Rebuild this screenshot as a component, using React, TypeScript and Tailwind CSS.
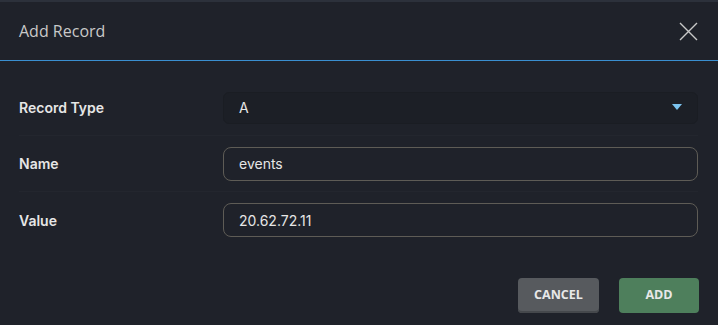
const font = { fontFamily: '"Inter", "Noto Sans", sans-serif' };

function Row({ label, children, last }: { label: string; children: React.ReactNode; last?: boolean }) {
  return (
    <div className={`flex h-[56px] items-center ${last ? "" : "border-b border-[#23262e]"}`}>
      <div className="w-[204px] shrink-0 text-[14px] font-semibold text-[#e6e6e6]">{label}</div>
      <div className="flex-1">{children}</div>
    </div>
  );
}

export default function App() {
  return (
    <div className="h-[325px] w-[718px] overflow-hidden border-t-2 border-[#2c313b] bg-[#1f222a]" style={font}>
      {/* header */}
      <div className="flex h-[58px] items-center justify-between pl-[19px] pr-[20px]">
        <h1 className="text-[16px] text-[#c9c9c9]" style={{ fontFamily: '"Open Sans", sans-serif' }}>
          Add Record
        </h1>
        <button className="flex h-[20px] w-[20px] items-center justify-center text-[#c8c8c8]" aria-label="Close">
          <svg width="19" height="19" viewBox="0 0 19 19" fill="none" stroke="currentColor" strokeWidth="1.4">
            <path d="M1 1 L18 18 M18 1 L1 18" />
          </svg>
        </button>
      </div>
      <div className="h-px bg-[#3a8fd0]" />

      {/* form */}
      <div className="pl-[19px] pr-[20px] pt-[19px]">
        <Row label="Record Type">
          <div className="flex h-[32px] items-center justify-between rounded-md border border-[#1a1d23] bg-[#1c1f26] pl-[15px] pr-[15px]">
            <span className="text-[14px] text-[#e6e6e6]">A</span>
            <svg width="10" height="7" viewBox="0 0 10 7">
              <path d="M0 0 H10 L5 6 Z" fill="#7cc4f0" />
            </svg>
          </div>
        </Row>
        <Row label="Name">
          <input
            defaultValue="events"
            className="h-[34px] w-full rounded-lg border border-[#5e5c56] bg-transparent pl-[15px] text-[14px] text-[#e6e6e6] outline-none"
          />
        </Row>
        <Row label="Value" last>
          <input
            defaultValue="20.62.72.11"
            className="h-[34px] w-full rounded-lg border border-[#5e5c56] bg-transparent pl-[15px] text-[14px] text-[#e6e6e6] outline-none"
          />
        </Row>
      </div>

      {/* footer */}
      <div className="mt-[30px] flex justify-end gap-[20px] pr-[19px]" style={{ fontFamily: '"Open Sans", sans-serif' }}>
        <button className="h-[35px] w-[81px] rounded-[4px] bg-[#575a5e] text-[12.5px] font-bold text-[#e8e8e8] shadow-[inset_0_-2px_0_#45484c]">
          CANCEL
        </button>
        <button className="h-[35px] w-[80px] rounded-[4px] bg-[#4e7f5c] text-[12.5px] font-bold text-[#e8e8e8]">
          ADD
        </button>
      </div>
    </div>
  );
}
